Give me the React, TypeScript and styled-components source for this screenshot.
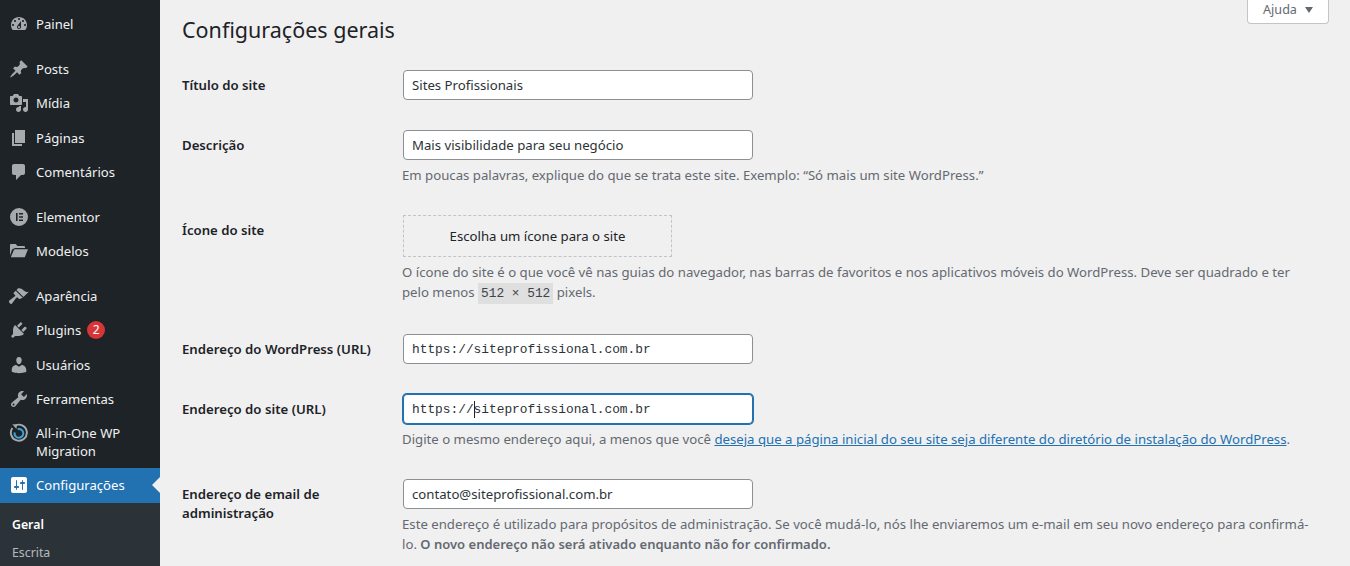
import React from 'react';
import styled, { createGlobalStyle } from 'styled-components';

const FONT = '"Noto Sans", "Open Sans", "Liberation Sans", sans-serif';
const MONO = '"Liberation Mono", "DejaVu Sans Mono", monospace';

const GlobalStyle = createGlobalStyle`
	html, body {
		margin: 0;
		padding: 0;
		height: 566px;
		overflow: hidden;
		background: #f0f0f1;
		font-family: ${FONT};
	}
	* {
		box-sizing: border-box;
	}
`;

const ICONS: Record<string, string> = {
	dashboard:
		'M3.76 16h12.48c1.1-1.37 1.76-3.11 1.76-5 0-4.42-3.58-8-8-8s-8 3.58-8 8c0 1.89.66 3.63 1.76 5zM10 4c.55 0 1 .45 1 1s-.45 1-1 1-1-.45-1-1 .45-1 1-1zM6 6c.55 0 1 .45 1 1s-.45 1-1 1-1-.45-1-1 .45-1 1-1zm8 0c.55 0 1 .45 1 1s-.45 1-1 1-1-.45-1-1 .45-1 1-1zm-5.37 5.55L12 7v6c0 1.1-.9 2-2 2s-2-.9-2-2c0-.57.24-1.08.63-1.45zM4 10c.55 0 1 .45 1 1s-.45 1-1 1-1-.45-1-1 .45-1 1-1zm12 0c.55 0 1 .45 1 1s-.45 1-1 1-1-.45-1-1 .45-1 1-1zm-5 3c0-.55-.45-1-1-1s-1 .45-1 1 .45 1 1 1 1-.45 1-1z',
	post: 'M10.44 3.02l1.82-1.82 6.36 6.35-1.83 1.82c-1.05-.68-2.48-.57-3.41.36l-.75.75c-.92.93-1.04 2.35-.35 3.41l-1.83 1.82-2.41-2.41-2.8 2.79c-.42.42-3.38 2.71-3.8 2.29s1.86-3.39 2.28-3.81l2.79-2.79L4.1 9.36l1.83-1.82c1.05.69 2.48.57 3.4-.36l.75-.75c.93-.92 1.05-2.35.36-3.41z',
	media:
		'M13 11V4c0-.55-.45-1-1-1h-1.67L9 1H5L3.67 3H2c-.55 0-1 .45-1 1v7c0 .55.45 1 1 1h10c.55 0 1-.45 1-1zM7 4.5c1.38 0 2.5 1.12 2.5 2.5S8.38 9.5 7 9.5 4.5 8.38 4.5 7 5.62 4.5 7 4.5zM14 6h5v10.5c0 1.38-1.12 2.5-2.5 2.5S14 17.88 14 16.5s1.12-2.5 2.5-2.5c.17 0 .34.02.5.05V9h-3V6zm-4 8.05V13h2v3.5c0 1.38-1.12 2.5-2.5 2.5S7 17.88 7 16.5 8.12 14 9.5 14c.17 0 .34.02.5.05z',
	page: 'M6 15V2h10v13H6zm-1 1h8v2H3V5h2v11z',
	comments: 'M5 2h9c1.1 0 2 .9 2 2v7c0 1.1-.9 2-2 2h-2l-5 5v-5H5c-1.1 0-2-.9-2-2V4c0-1.1.9-2 2-2z',
	elementor:
		'M10 1a9 9 0 1 0 0 18 9 9 0 0 0 0-18zM7 6h1.6v8H7V6zm3 0h4v1.6h-4V6zm0 3.2h4v1.6h-4V9.2zm0 3.2h4V14h-4v-1.6z',
	folder: 'M1 4.2c0-.7.5-1.2 1.2-1.2h4.6l1.6 2h6.4c.7 0 1.2.5 1.2 1.2V7H6L3 8.6 1 14.5V4.2zM6.4 8.2H19l-3.2 8H1.8l3-7c.2-.6.9-1 1.6-1z',
	appearance:
		'M14.48 11.06L7.41 3.99l1.5-1.5c.5-.56 2.3-.47 3.51.32 1.21.8 1.43 1.28 2.91 2.1 1.18.64 2.45 1.26 4.45.85zm-.71.71L6.7 4.7 4.93 6.47c-.39.39-.39 1.02 0 1.41l1.06 1.06c.39.39.39 1.03 0 1.42-.6.6-5.4 3.95-6 4.55-.39.39-.39 1.02 0 1.41l1.42 1.42c.39.39 1.02.39 1.41 0 .6-.6 3.95-5.4 4.55-6 .39-.39 1.02-.39 1.41 0l1.06 1.06c.39.39 1.02.39 1.41 0z',
	plugins:
		'M13.11 4.36L9.87 7.6 8 5.73l3.24-3.24c.35-.34 1.05-.2 1.56.32.52.51.66 1.21.31 1.55zm-8 1.77l.91-1.12 9.01 9.01-1.19.84c-.71.71-2.63 1.16-3.82 1.16H6.14L4.9 17.26c-.59.59-1.54.59-2.12 0-.59-.58-.59-1.53 0-2.12l1.24-1.24v-3.88c0-1.13.4-3.19 1.09-3.89zm7.26 3.97l3.24-3.24c.34-.35 1.04-.21 1.55.31.52.51.66 1.21.31 1.55l-3.24 3.25z',
	users:
		'M10 9.25c-2.27 0-2.73-3.44-2.73-3.44C7 4.02 7.82 2 9.97 2c2.16 0 2.98 2.02 2.71 3.81 0 0-.41 3.44-2.68 3.44zm0 2.57L12.72 10c2.39 0 4.52 2.33 4.52 4.53v2.49s-3.65 1.13-7.24 1.13c-3.65 0-7.24-1.13-7.24-1.13v-2.49c0-2.25 1.94-4.48 4.47-4.48z',
	tools:
		'M16.68 9.77c-1.34 1.34-3.3 1.67-4.95.99l-5.41 6.52c-.99.99-2.59.99-3.58 0s-.99-2.59 0-3.57l6.52-5.42c-.68-1.65-.35-3.61.99-4.95 1.28-1.28 3.12-1.62 4.72-1.06l-2.89 2.89 2.82 2.82 2.86-2.87c.53 1.58.18 3.39-1.08 4.65zM3.81 16.21c.4.39 1.04.39 1.43 0 .4-.4.4-1.04 0-1.43-.39-.4-1.03-.4-1.43 0-.39.39-.39 1.03 0 1.43z',
	settings:
		'M18 16V4c0-1.1-.9-2-2-2H4c-1.1 0-2 .9-2 2v12c0 1.1.9 2 2 2h12c1.1 0 2-.9 2-2zM8 11h1c.55 0 1 .45 1 1s-.45 1-1 1H8v1.5c0 .28-.22.5-.5.5s-.5-.22-.5-.5V13H6c-.55 0-1-.45-1-1s.45-1 1-1h1V5.5c0-.28.22-.5.5-.5s.5.22.5.5V11zm5-2h-1c-.55 0-1-.45-1-1s.45-1 1-1h1V5.5c0-.28.22-.5.5-.5s.5.22.5.5V7h1c.55 0 1 .45 1 1s-.45 1-1 1h-1v5.5c0 .28-.22.5-.5.5s-.5-.22-.5-.5V9z',
};

const Icon: React.FC<{ name: string; active?: boolean }> = ({ name, active }) => (
	<IconBox viewBox='0 0 20 20' $active={active}>
		<path d={ICONS[name]} fillRule='evenodd' />
	</IconBox>
);

const MigrationIcon = () => (
	<TopIconBox viewBox='0 0 20 20'>
		<path d='M6.2 2.6A8 8 0 1 1 3.4 5' fill='none' stroke='#a7aaad' strokeWidth='1.9' />
		<path d='M3.4 1.2l4.6.4-.6 4.4z' fill='#a7aaad' />
		<path d='M8.6 6.1a4.4 4.4 0 1 1-3 3.3' fill='none' stroke='#3aa3d8' strokeWidth='2' />
	</TopIconBox>
);

const App: React.FC = () => {
	return (
		<Page>
			<GlobalStyle />
			<Sidebar>
				<MenuItem>
					<Icon name='dashboard' />
					Painel
				</MenuItem>
				<Separator />
				<MenuItem>
					<Icon name='post' />
					Posts
				</MenuItem>
				<MenuItem>
					<Icon name='media' />
					Mídia
				</MenuItem>
				<MenuItem>
					<Icon name='page' />
					Páginas
				</MenuItem>
				<MenuItem>
					<Icon name='comments' />
					Comentários
				</MenuItem>
				<Separator $wide />
				<MenuItem>
					<Icon name='elementor' />
					Elementor
				</MenuItem>
				<MenuItem>
					<Icon name='folder' />
					Modelos
				</MenuItem>
				<Separator />
				<MenuItem>
					<Icon name='appearance' />
					Aparência
				</MenuItem>
				<MenuItem>
					<Icon name='plugins' />
					Plugins
					<Badge>2</Badge>
				</MenuItem>
				<MenuItem>
					<Icon name='users' />
					Usuários
				</MenuItem>
				<MenuItem>
					<Icon name='tools' />
					Ferramentas
				</MenuItem>
				<TallMenuItem>
					<MigrationIcon />
					<span>
						All-in-One WP
						<br />
						Migration
					</span>
				</TallMenuItem>
				<ActiveMenuItem>
					<Icon name='settings' active />
					Configurações
				</ActiveMenuItem>
				<SubMenu>
					<SubItem $current>Geral</SubItem>
					<SubItem>Escrita</SubItem>
				</SubMenu>
			</Sidebar>
			<Content>
				<HelpButton>
					Ajuda
					<HelpCaret />
				</HelpButton>
				<Title>Configurações gerais</Title>
				<Form>
					<FormRow>
						<FieldLabel>Título do site</FieldLabel>
						<FieldBody>
							<TextInput type='text' defaultValue='Sites Profissionais' readOnly />
						</FieldBody>
					</FormRow>
					<FormRow>
						<FieldLabel>Descrição</FieldLabel>
						<FieldBody>
							<TextInput type='text' defaultValue='Mais visibilidade para seu negócio' readOnly />
							<Description>Em poucas palavras, explique do que se trata este site. Exemplo: “Só mais um site WordPress.”</Description>
						</FieldBody>
					</FormRow>
					<FormRow>
						<FieldLabel>Ícone do site</FieldLabel>
						<FieldBody>
							<IconPicker type='button'>Escolha um ícone para o site</IconPicker>
							<Description>
								O ícone do site é o que você vê nas guias do navegador, nas barras de favoritos e nos aplicativos móveis do WordPress. Deve ser quadrado e ter
								<br />
								pelo menos <Code>512 × 512</Code> pixels.
							</Description>
						</FieldBody>
					</FormRow>
					<FormRow>
						<FieldLabel>Endereço do WordPress (URL)</FieldLabel>
						<FieldBody>
							<UrlInput type='text' defaultValue='https://siteprofissional.com.br' readOnly />
						</FieldBody>
					</FormRow>
					<FormRow>
						<FieldLabel>Endereço do site (URL)</FieldLabel>
						<FieldBody>
							<FocusedField>
								https://
								<Caret />
								siteprofissional.com.br
							</FocusedField>
							<Description>
								Digite o mesmo endereço aqui, a menos que você{' '}
								<DocLink href='#'>deseja que a página inicial do seu site seja diferente do diretório de instalação do WordPress</DocLink>.
							</Description>
						</FieldBody>
					</FormRow>
					<FormRow>
						<FieldLabel>
							Endereço de email de
							<br />
							administração
						</FieldLabel>
						<FieldBody>
							<TextInput type='text' defaultValue='contato@siteprofissional.com.br' readOnly />
							<Description>
								Este endereço é utilizado para propósitos de administração. Se você mudá-lo, nós lhe enviaremos um e-mail em seu novo endereço para confirmá-
								<br />
								lo. <strong>O novo endereço não será ativado enquanto não for confirmado.</strong>
							</Description>
						</FieldBody>
					</FormRow>
				</Form>
			</Content>
		</Page>
	);
};

export default App;

const Page = styled.div`
	display: flex;
	width: 1350px;
	height: 566px;
	overflow: hidden;
`;

const Sidebar = styled.nav`
	flex: 0 0 160px;
	display: flex;
	flex-direction: column;
	padding-top: 7.3px;
	background: #1d2327;
`;

const Separator = styled.div<{ $wide?: boolean }>`
	flex: 0 0 ${({ $wide }) => ($wide ? '10.6px' : '10px')};
`;

const MenuItem = styled.div`
	display: flex;
	flex: 0 0 34.4px;
	align-items: center;
	gap: 7px;
	padding-left: 9px;
	color: #f0f0f1;
	font-size: 13.1px;
	line-height: 18px;
	white-space: nowrap;
`;

const TallMenuItem = styled(MenuItem)`
	flex: 0 0 51.7px;
	align-items: flex-start;
	padding-top: 8px;
`;

const ActiveMenuItem = styled(MenuItem)`
	position: relative;
	flex: 0 0 35px;
	background: #2271b1;
	color: #fff;

	&::after {
		content: '';
		position: absolute;
		top: 50%;
		right: 0;
		margin-top: -8px;
		border: 8px solid transparent;
		border-right-color: #f0f0f1;
	}
`;

const IconBox = styled.svg<{ $active?: boolean }>`
	flex: 0 0 20px;
	width: 20px;
	height: 20px;
	fill: ${({ $active }) => ($active ? '#fff' : '#a7aaad')};
`;

const TopIconBox = styled(IconBox)`
	margin-top: -1px;
`;

const Badge = styled.span`
	display: flex;
	align-items: center;
	justify-content: center;
	width: 18px;
	height: 18px;
	margin-left: -1px;
	border-radius: 50%;
	background: #d63638;
	color: #fff;
	font-size: 12px;
`;

const SubMenu = styled.div`
	flex: 1;
	display: flex;
	flex-direction: column;
	gap: 9px;
	padding: 12px 12px 0;
	background: #2c3338;
`;

const SubItem = styled.div<{ $current?: boolean }>`
	color: ${({ $current }) => ($current ? '#fff' : 'rgba(240, 246, 252, 0.7)')};
	font-size: 12.3px;
	font-weight: ${({ $current }) => ($current ? 600 : 400)};
	line-height: 19px;
`;

const Content = styled.main`
	flex: 1;
	padding: 0 21px 0 22px;
	color: #3c434a;
`;

const HelpButton = styled.button`
	float: right;
	display: flex;
	align-items: center;
	justify-content: center;
	gap: 8px;
	width: 82px;
	height: 24px;
	padding: 0 0 4px;
	border: 1px solid #c3c4c7;
	border-top: 0;
	border-radius: 0 0 4px 4px;
	background: #fff;
	color: #646970;
	font-family: ${FONT};
	font-size: 12.6px;
`;

const HelpCaret = styled.span`
	width: 0;
	height: 0;
	margin-top: 1px;
	border-style: solid;
	border-width: 6px 4px 0;
	border-color: #646970 transparent transparent;
`;

const Title = styled.h1`
	margin: 0;
	padding: 15px 0 0;
	color: #1d2327;
	font-size: 21.5px;
	font-weight: 400;
	line-height: 30px;
`;

const Form = styled.div`
	display: flex;
	flex-direction: column;
	gap: 30px;
	padding-top: 25px;
`;

const FormRow = styled.div`
	display: grid;
	grid-template-columns: 221px 1fr;
`;

const FieldLabel = styled.div`
	padding-top: 6px;
	color: #1d2327;
	font-size: 13.2px;
	font-weight: 600;
	line-height: 19px;
	white-space: nowrap;
`;

const FieldBody = styled.div`
	display: flex;
	flex-direction: column;
	align-items: flex-start;
`;

const TextInput = styled.input`
	width: 350px;
	height: 30px;
	padding: 0 8px;
	border: 1px solid #8c8f94;
	border-radius: 4px;
	outline: none;
	background: #fff;
	color: #2c3338;
	font-family: ${FONT};
	font-size: 13.2px;
`;

const UrlInput = styled(TextInput)`
	font-family: ${MONO};
	font-size: 12.83px;
`;

const FocusedField = styled.div`
	display: flex;
	align-items: center;
	width: 350px;
	height: 30px;
	padding: 0 8px;
	border: 1px solid #2271b1;
	border-radius: 4px;
	box-shadow: 0 0 0 1px #2271b1;
	background: #fff;
	color: #2c3338;
	font-family: ${MONO};
	font-size: 12.83px;
	white-space: pre;
`;

const Caret = styled.span`
	width: 1px;
	height: 17px;
	margin-right: -1px;
	background: #1d2327;
`;

const Description = styled.p`
	margin: 5px 0 0 -1px;
	color: #646970;
	font-size: 13.2px;
	line-height: 20px;
	white-space: nowrap;

	strong {
		font-size: 13px;
		font-weight: 600;
	}
`;

const IconPicker = styled.button`
	width: 269px;
	height: 42px;
	padding: 0;
	border: 1px dashed #c3c4c7;
	background: transparent;
	color: #1d2327;
	font-family: ${FONT};
	font-size: 13.2px;
`;

const Code = styled.code`
	display: inline-block;
	height: 21px;
	padding: 0 3px;
	background: rgba(0, 0, 0, 0.07);
	color: #3c434a;
	font-family: ${MONO};
	font-size: 12.83px;
	line-height: 21px;
`;

const DocLink = styled.a`
	color: #2271b1;
	text-decoration: underline;
`;
